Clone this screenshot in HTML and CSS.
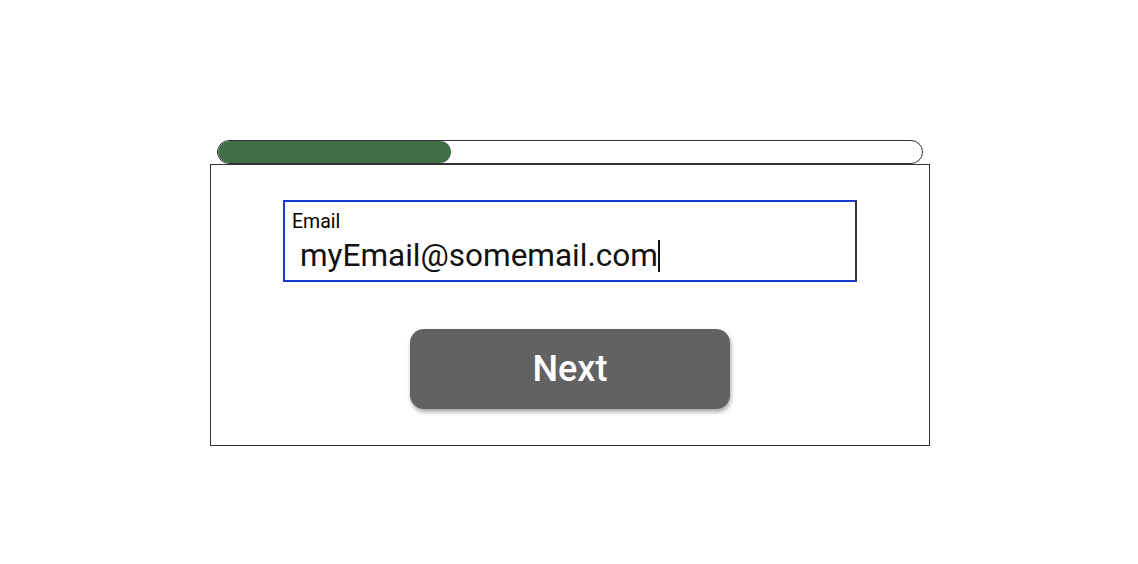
FILE: index.html
```html
<!DOCTYPE html>
<html>
<head>
<meta charset="utf-8">
<link rel="stylesheet" href="styles.css">
</head>
<body>
<div class="page">
  <div class="wrap">
    <div class="progress"><div class="fill"></div></div>
    <div class="card">
      <div class="field">
        <div class="label">Email</div>
        <div class="value">myEmail@somemail.com<span class="caret"></span></div>
      </div>
      <button class="next">Next</button>
    </div>
  </div>
</div>
</body>
</html>
```
FILE: styles.css
```css
* { box-sizing: border-box; }
html, body { margin: 0; padding: 0; background: #fff; }
body { font-family: Roboto, "Noto Sans", sans-serif; width: 1138px; height: 564px; }
.page { padding-top: 140px; padding-left: 210px; }
.wrap { width: 720px; display: flex; flex-direction: column; }
.progress {
  margin-left: 7px;
  width: 706px;
  height: 24px;
  border: 1px solid #333;
  border-radius: 12px;
  overflow: hidden;
  display: flex;
}
.fill {
  width: 233px;
  height: 100%;
  background: #426e48;
  border-radius: 12px;
}
.card {
  width: 720px;
  height: 282px;
  border: 1px solid #333;
  display: flex;
  flex-direction: column;
  align-items: center;
  padding-top: 35px;
}
.field {
  width: 574px;
  height: 82px;
  border-style: solid;
  border-width: 2px;
  border-color: #1a3bd0 #333 #1a3bd0 #1a3bd0;
  padding: 9px 0 0 7px;
}
.label { font-size: 19.5px; line-height: 22px; color: #000; }
.value {
  font-size: 31.5px;
  line-height: 36px;
  color: #111;
  padding-left: 8px;
  margin-top: 5px;
  display: flex;
  align-items: center;
}
.caret { display: inline-block; width: 2px; height: 32px; background: #111; margin-left: 0; }
.next {
  margin-top: 47px;
  width: 320px;
  height: 80px;
  border: none;
  border-radius: 14px;
  background: #626262;
  color: #fff;
  font-family: Roboto, sans-serif;
  font-weight: 500;
  font-size: 36px;
  box-shadow: 1px 3px 4px rgba(0,0,0,0.35);
}
```
